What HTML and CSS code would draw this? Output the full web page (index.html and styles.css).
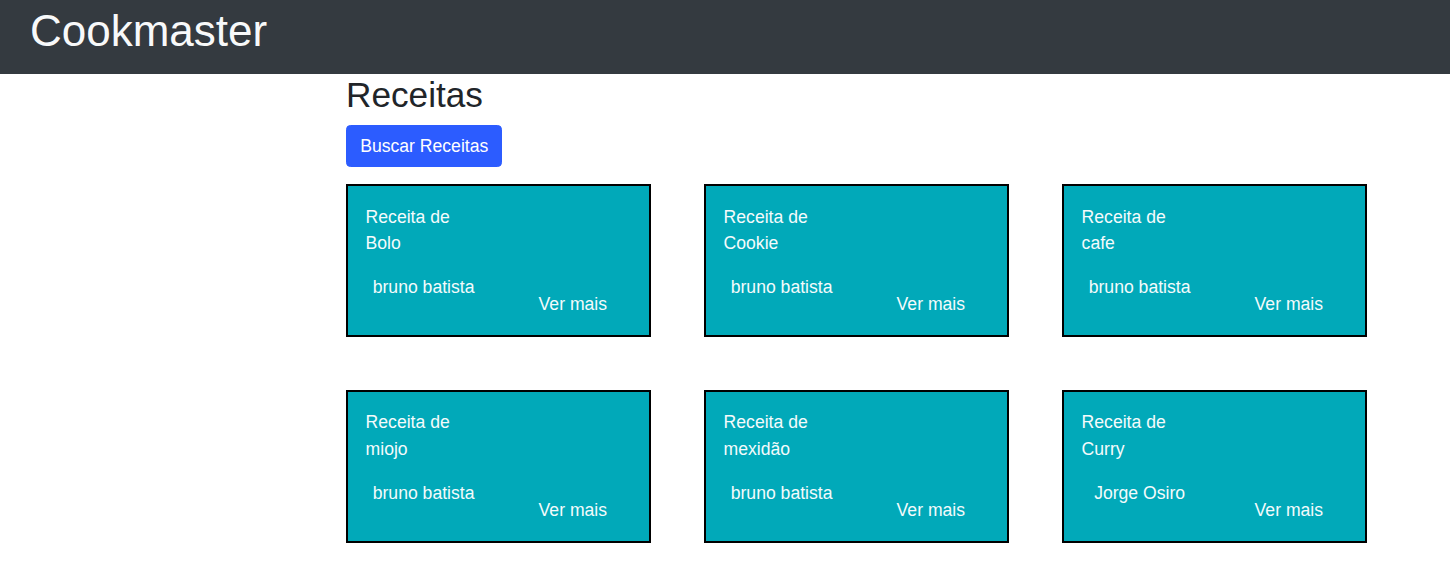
FILE: index.html
```html
<!DOCTYPE html>
<html lang="pt">
<head>
<meta charset="utf-8">
<title>Cookmaster</title>
<link rel="stylesheet" href="styles.css">
</head>
<body>
<header class="navbar">
  <span class="brand">Cookmaster</span>
</header>
<main class="content">
  <h2 class="title">Receitas</h2>
  <button class="btn-primary" type="button">Buscar Receitas</button>
  <section class="grid">
    <article class="card">
      <div class="card-title">Receita de Bolo</div>
      <div class="card-row"><span class="author">bruno batista</span><a class="more">Ver mais</a></div>
    </article>
    <article class="card">
      <div class="card-title">Receita de Cookie</div>
      <div class="card-row"><span class="author">bruno batista</span><a class="more">Ver mais</a></div>
    </article>
    <article class="card">
      <div class="card-title">Receita de cafe</div>
      <div class="card-row"><span class="author">bruno batista</span><a class="more">Ver mais</a></div>
    </article>
    <article class="card">
      <div class="card-title">Receita de miojo</div>
      <div class="card-row"><span class="author">bruno batista</span><a class="more">Ver mais</a></div>
    </article>
    <article class="card">
      <div class="card-title">Receita de mexidão</div>
      <div class="card-row"><span class="author">bruno batista</span><a class="more">Ver mais</a></div>
    </article>
    <article class="card">
      <div class="card-title">Receita de Curry</div>
      <div class="card-row"><span class="author">Jorge Osiro</span><a class="more">Ver mais</a></div>
    </article>
  </section>
</main>
</body>
</html>
```

FILE: styles.css
```css
* { box-sizing: border-box; }
html, body {
  margin: 0;
  padding: 0;
  background: #ffffff;
  font-family: "Liberation Sans", Arial, sans-serif;
  color: #212529;
}
.navbar {
  height: 74px;
  background: #343a40;
  padding: 4.6px 0 0 30px;
}
.brand {
  display: block;
  font-size: 44px;
  line-height: 1.2;
  color: #f8f9fa;
}
.content {
  margin-left: 346px;
  width: 1021px;
}
.title {
  margin: 0;
  font-size: 35.2px;
  font-weight: 400;
  line-height: 1.2;
  color: #212529;
}
.btn-primary {
  display: block;
  margin-top: 8.8px;
  height: 42px;
  padding: 0 13.2px;
  border: 1px solid #2c5cff;
  border-radius: 4.4px;
  background: #2c5cff;
  color: #ffffff;
  font-family: "Liberation Sans", Arial, sans-serif;
  font-size: 17.6px;
  line-height: 1.5;
}
.grid {
  margin-top: 17px;
  display: grid;
  grid-template-columns: repeat(3, 305px);
  column-gap: 53px;
  row-gap: 53px;
}
.card {
  height: 152.8px;
  background: #01a9b9;
  border: 2px solid #000000;
  padding: 17.6px;
  color: #f4fbfc;
  font-size: 17.6px;
  line-height: 26.4px;
}
.card-title {
  width: 100px;
}
.card-row {
  margin-top: 17.4px;
  display: flex;
  align-items: flex-start;
}
.author {
  width: 116px;
  text-align: center;
}
.more {
  margin-left: 57px;
  margin-top: 17px;
  color: #f4fbfc;
}
```
